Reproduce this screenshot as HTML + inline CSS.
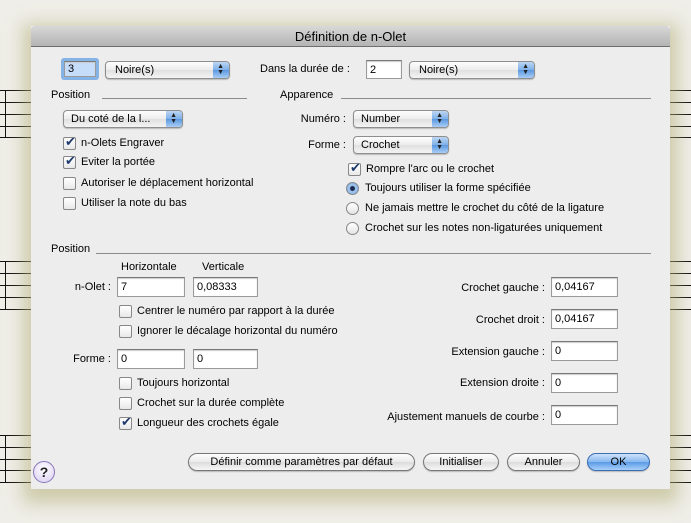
<!DOCTYPE html>
<html><head><meta charset="utf-8">
<style>
*{margin:0;padding:0;box-sizing:border-box}
body{width:691px;height:523px;overflow:hidden;background:#efeee8;font-family:"Liberation Sans",sans-serif;font-size:11px;color:#000;position:relative}
.a{position:absolute}
.sl{position:absolute;height:1px;background:#111}
.t{position:absolute;line-height:14px;white-space:nowrap}
.r{text-align:right}
.fld{position:absolute;background:#fff;border:1px solid #9a9a9a;border-top-color:#777;box-shadow:inset 0 1px 1px #ccc;display:flex;align-items:center;padding-left:3px;font-size:11px}
.pop{position:absolute;height:18px;border:1px solid #8e8e8e;border-radius:4px;background:linear-gradient(#fdfdfd,#ececec 50%,#e0e0e0 51%,#f4f4f4);line-height:16px;padding-left:9px;box-shadow:0 1px 1px #bbb}
.pop::after{content:"";position:absolute;right:0;top:0;bottom:0;width:16px;border-radius:0 3px 3px 0;background:linear-gradient(#bcd6f3,#7fb0e8 50%,#5b98e0 51%,#a9cdf5)}
.pop i{position:absolute;right:5px;top:2px;z-index:2;font-style:normal;font-size:7px;line-height:6px;color:#222}
.cb{position:absolute;width:13px;height:13px;border:1px solid #888;border-radius:2px;background:linear-gradient(#fff,#e8e8e8)}
.cb.on::after{content:"✔";position:absolute;left:1px;top:-4px;font-size:13px;color:#1f3b6e}
.rd{position:absolute;width:13px;height:13px;border:1px solid #888;border-radius:50%;background:linear-gradient(#fff,#e4e4e4)}
.rd.on{background:radial-gradient(circle,#1a2a50 2px,#a9cbf0 3px,#6aa3e4)}
.ln{position:absolute;height:1px;background:#8c8c8c}
.btn{position:absolute;height:18px;border:1px solid #777;border-radius:9px;background:linear-gradient(#fdfdfd,#eaeaea 50%,#dcdcdc 51%,#f6f6f6);text-align:center;line-height:16px;box-shadow:0 1px 1px #bbb}
</style></head><body>
<div class="sl" style="left:0;width:31px;top:90px"></div><div class="sl" style="left:0;width:31px;top:102px"></div><div class="sl" style="left:0;width:31px;top:114px"></div><div class="sl" style="left:0;width:31px;top:126px"></div><div class="sl" style="left:0;width:31px;top:137px"></div>
<div class="a" style="left:5px;top:90px;width:1px;height:48px;background:#111"></div>
<div class="sl" style="left:0;width:31px;top:261px"></div><div class="sl" style="left:0;width:31px;top:273px"></div><div class="sl" style="left:0;width:31px;top:285px"></div><div class="sl" style="left:0;width:31px;top:297px"></div><div class="sl" style="left:0;width:31px;top:309px"></div>
<div class="a" style="left:5px;top:261px;width:1px;height:49px;background:#111"></div>
<div class="sl" style="left:0;width:31px;top:435px"></div><div class="sl" style="left:0;width:31px;top:447px"></div><div class="sl" style="left:0;width:31px;top:459px"></div><div class="sl" style="left:0;width:31px;top:470px"></div><div class="sl" style="left:0;width:31px;top:482px"></div>
<div class="a" style="left:5px;top:435px;width:1px;height:48px;background:#111"></div>
<div class="sl" style="left:660px;width:31px;top:90px"></div><div class="sl" style="left:660px;width:31px;top:102px"></div><div class="sl" style="left:660px;width:31px;top:114px"></div><div class="sl" style="left:660px;width:31px;top:126px"></div><div class="sl" style="left:660px;width:31px;top:137px"></div>
<div class="sl" style="left:660px;width:31px;top:261px"></div><div class="sl" style="left:660px;width:31px;top:273px"></div><div class="sl" style="left:660px;width:31px;top:285px"></div><div class="sl" style="left:660px;width:31px;top:297px"></div><div class="sl" style="left:660px;width:31px;top:309px"></div>
<div class="sl" style="left:660px;width:31px;top:435px"></div><div class="sl" style="left:660px;width:31px;top:447px"></div><div class="sl" style="left:660px;width:31px;top:459px"></div><div class="sl" style="left:660px;width:31px;top:470px"></div><div class="sl" style="left:660px;width:31px;top:482px"></div>
<div class="a" style="left:31px;top:26px;width:639px;height:463px;background:#ededed;box-shadow:0 6px 16px 8px rgba(185,180,130,0.6)"></div>
<div class="a" style="left:31px;top:26px;width:639px;height:21px;background:linear-gradient(#d8d8d8,#b4b4b4);border-bottom:1px solid #6e6e6e;border-radius:4px 4px 0 0"></div>
<div class="t" style="left:31px;width:639px;top:30px;text-align:center;font-size:13px">Définition de n-Olet</div>

<div class="a" style="left:61px;top:58px;width:38px;height:22px;border-radius:3px;background:#86b3e6"></div>
<div class="fld" style="left:64px;top:61px;width:32px;height:16px;background:#c6ddfa">3</div>
<div class="pop" style="left:105px;top:61px;width:125px">Noire(s)<i>▲<br>▼</i></div>
<div class="t" style="left:260px;top:62px">Dans la durée de :</div>
<div class="fld" style="left:366px;top:60px;width:36px;height:19px">2</div>
<div class="pop" style="left:409px;top:61px;width:126px">Noire(s)<i>▲<br>▼</i></div>

<div class="t" style="left:51px;top:88px">Position</div><div class="ln" style="left:102px;width:145px;top:98px"></div>
<div class="t" style="left:280px;top:88px">Apparence</div><div class="ln" style="left:341px;width:310px;top:98px"></div>
<div class="pop" style="left:63px;top:110px;width:120px;padding-left:7px">Du coté de la l...<i>▲<br>▼</i></div>
<div class="cb on" style="left:63px;top:137px"></div><div class="t" style="left:81px;top:136px">n-Olets Engraver</div>
<div class="cb on" style="left:63px;top:156px"></div><div class="t" style="left:81px;top:155px">Eviter la portée</div>
<div class="cb" style="left:63px;top:177px"></div><div class="t" style="left:81px;top:176px">Autoriser le déplacement horizontal</div>
<div class="cb" style="left:63px;top:197px"></div><div class="t" style="left:81px;top:196px">Utiliser la note du bas</div>

<div class="t r" style="left:280px;width:66px;top:112px">Numéro :</div>
<div class="pop" style="left:353px;top:110px;width:96px;padding-left:7px">Number<i>▲<br>▼</i></div>
<div class="t r" style="left:280px;width:66px;top:138px">Forme :</div>
<div class="pop" style="left:353px;top:136px;width:96px;padding-left:7px">Crochet<i>▲<br>▼</i></div>
<div class="cb on" style="left:348px;top:163px"></div><div class="t" style="left:366px;top:162px">Rompre l'arc ou le crochet</div>
<div class="rd on" style="left:346px;top:182px"></div><div class="t" style="left:365px;top:181px">Toujours utiliser la forme spécifiée</div>
<div class="rd" style="left:346px;top:202px"></div><div class="t" style="left:365px;top:201px">Ne jamais mettre le crochet du côté de la ligature</div>
<div class="rd" style="left:346px;top:222px"></div><div class="t" style="left:365px;top:221px">Crochet sur les notes non-ligaturées uniquement</div>

<div class="t" style="left:51px;top:242px">Position</div><div class="ln" style="left:96px;width:555px;top:253px"></div>
<div class="t" style="left:121px;top:260px">Horizontale</div><div class="t" style="left:202px;top:260px">Verticale</div>
<div class="t r" style="left:50px;width:61px;top:280px">n-Olet :</div>
<div class="fld" style="left:117px;top:277px;width:68px;height:20px">7</div>
<div class="fld" style="left:193px;top:277px;width:65px;height:20px">0,08333</div>
<div class="cb" style="left:119px;top:305px"></div><div class="t" style="left:137px;top:304px">Centrer le numéro par rapport à la durée</div>
<div class="cb" style="left:119px;top:325px"></div><div class="t" style="left:137px;top:324px">Ignorer le décalage horizontal du numéro</div>
<div class="t r" style="left:50px;width:61px;top:352px">Forme :</div>
<div class="fld" style="left:117px;top:349px;width:68px;height:20px">0</div>
<div class="fld" style="left:193px;top:349px;width:65px;height:20px">0</div>
<div class="cb" style="left:119px;top:377px"></div><div class="t" style="left:137px;top:376px">Toujours horizontal</div>
<div class="cb" style="left:119px;top:397px"></div><div class="t" style="left:137px;top:396px">Crochet sur la durée complète</div>
<div class="cb on" style="left:119px;top:417px"></div><div class="t" style="left:137px;top:416px">Longueur des crochets égale</div>

<div class="t r" style="left:345px;width:200px;top:281px">Crochet gauche :</div><div class="fld" style="left:551px;top:277px;width:67px;height:20px">0,04167</div>
<div class="t r" style="left:345px;width:200px;top:313px">Crochet droit :</div><div class="fld" style="left:551px;top:309px;width:67px;height:20px">0,04167</div>
<div class="t r" style="left:345px;width:200px;top:345px">Extension gauche :</div><div class="fld" style="left:551px;top:341px;width:67px;height:20px">0</div>
<div class="t r" style="left:345px;width:200px;top:376px">Extension droite :</div><div class="fld" style="left:551px;top:373px;width:67px;height:20px">0</div>
<div class="t r" style="left:345px;width:200px;top:410px">Ajustement manuels de courbe :</div><div class="fld" style="left:551px;top:405px;width:67px;height:20px">0</div>

<div class="btn" style="left:188px;top:453px;width:227px">Définir comme paramètres par défaut</div>
<div class="btn" style="left:423px;top:453px;width:76px">Initialiser</div>
<div class="btn" style="left:507px;top:453px;width:73px">Annuler</div>
<div class="btn" style="left:587px;top:453px;width:63px;border-color:#3b6fb4;background:linear-gradient(#cfe3fb,#86b7ee 50%,#5a9ae6 51%,#a8d0fa)">OK</div>
<div class="a" style="left:33px;top:461px;width:22px;height:22px;border-radius:50%;border:1px solid #8a76b8;background:radial-gradient(circle at 50% 35%,#fff,#d8ccf2);text-align:center;line-height:20px;font-weight:bold;font-size:14px;color:#222">?</div>
</body></html>
